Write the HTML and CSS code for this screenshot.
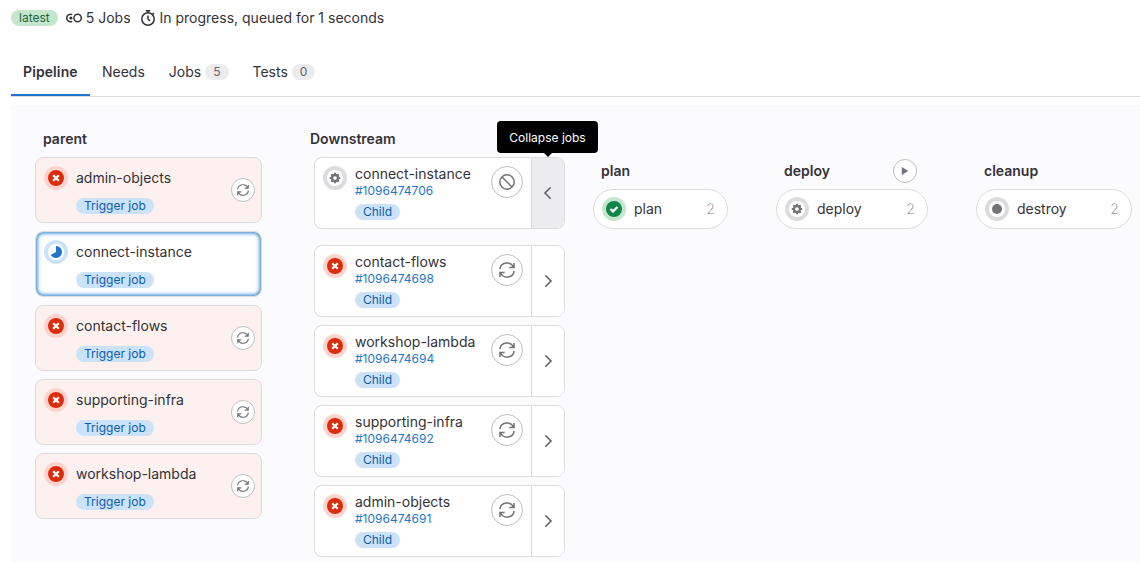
FILE: index.html
```html
<!DOCTYPE html>
<html lang="en">
<head>
<meta charset="utf-8">
<title>Pipeline</title>
<link rel="stylesheet" href="styles.css">
</head>
<body>
<svg class="sprite" aria-hidden="true">
  <symbol id="failed" viewBox="0 0 24 24"><circle cx="12" cy="12" r="12" fill="#fdd4cd"/><circle cx="12" cy="12" r="8" fill="#dd2b0e"/><path d="M9.2 9.2l5.6 5.6m0-5.6l-5.6 5.6" stroke="#fff" stroke-width="2.2"/></symbol>
  <symbol id="running" viewBox="0 0 24 24"><circle cx="12" cy="12" r="12" fill="#cbe2f9"/><circle cx="12" cy="12" r="8" fill="#fff"/><path d="M12 12V6a6 6 0 1 1-5.2 9z" fill="#1f75cb"/></symbol>
  <symbol id="success" viewBox="0 0 24 24"><circle cx="12" cy="12" r="12" fill="#c3e6cd"/><circle cx="12" cy="12" r="8" fill="#108548"/><path d="M8.5 12l2.5 2.4 4.5-4.4" fill="none" stroke="#fff" stroke-width="2.2"/></symbol>
  <symbol id="manual" viewBox="0 0 24 24"><circle cx="12" cy="12" r="12" fill="#dcdcde"/><circle cx="12" cy="12" r="8" fill="#fff"/><circle cx="12" cy="12" r="3" fill="none" stroke="#737278" stroke-width="2.3"/><path d="M12 6.8v2M12 15.2v2M6.8 12h2M15.2 12h2M8.3 8.3l1.4 1.4M14.3 14.3l1.4 1.4M15.7 8.3l-1.4 1.4M9.7 14.3l-1.4 1.4" stroke="#737278" stroke-width="2"/></symbol>
  <symbol id="created" viewBox="0 0 24 24"><circle cx="12" cy="12" r="12" fill="#dcdcde"/><circle cx="12" cy="12" r="8" fill="#fff"/><circle cx="12" cy="12" r="5" fill="#737278"/></symbol>
  <symbol id="retry" viewBox="0 0 16 16"><path d="M.8 7.2A7.2 7.2 0 0 1 14.4 5M15.2 8.8A7.2 7.2 0 0 1 1.6 11M15 1v4.5h-4.7M1 15v-4.5h4.7" fill="none" stroke="currentColor" stroke-width="1.5"/></symbol>
  <symbol id="cancel" viewBox="0 0 16 16"><circle cx="8" cy="8" r="7.2" fill="none" stroke="currentColor" stroke-width="1.5"/><path d="M3 3l10 10" stroke="currentColor" stroke-width="1.5"/></symbol>
  <symbol id="right" viewBox="0 0 16 16"><path d="M5.8 2.8L11 8l-5.2 5.2" fill="none" stroke="currentColor" stroke-width="1.6" stroke-linecap="round"/></symbol>
  <symbol id="left" viewBox="0 0 16 16"><path d="M10.2 2.8L5 8l5.2 5.2" fill="none" stroke="currentColor" stroke-width="1.6" stroke-linecap="round"/></symbol>
  <symbol id="play" viewBox="0 0 12 12"><path d="M2.8 2v8L9.3 6z" fill="currentColor"/></symbol>
  <symbol id="jobs" viewBox="0 0 16 16"><circle cx="11.6" cy="8" r="3.7" fill="none" stroke="currentColor" stroke-width="1.5"/><path d="M6.2 4.6A3.8 3.8 0 1 0 6.2 11.4" fill="none" stroke="currentColor" stroke-width="1.5"/><circle cx="4.9" cy="8" r="1.6" fill="currentColor"/></symbol>
  <symbol id="timer" viewBox="0 0 16 16"><circle cx="8" cy="9" r="6.2" fill="none" stroke="currentColor" stroke-width="1.5"/><path d="M8 5.5V9l2 2M8 3V1M5.8.8h4.4M12.6 4.4l1.4-1.3" fill="none" stroke="currentColor" stroke-width="1.5"/></symbol>
</svg>

<div class="summary">
  <span class="badge badge-success">latest</span>
  <svg class="icon jobs-icon"><use href="#jobs"/></svg><span class="jobs-total">5 Jobs</span>
  <svg class="icon timer-icon"><use href="#timer"/></svg><span>In progress, queued for 1 seconds</span>
</div>

<nav class="tabs">
  <a class="tab tab-active">Pipeline</a>
  <a class="tab">Needs</a>
  <a class="tab">Jobs<span class="count">5</span></a>
  <a class="tab">Tests<span class="count">0</span></a>
</nav>

<main class="graph">
  <section class="parent">
    <h2 class="title">parent</h2>
    <div class="job job-failed"><svg class="status"><use href="#failed"/></svg><div class="job-text"><span class="name">admin-objects</span><span class="badge">Trigger job</span></div><button class="action small"><svg><use href="#retry"/></svg></button></div>
    <div class="job job-focus"><svg class="status"><use href="#running"/></svg><div class="job-text"><span class="name">connect-instance</span><span class="badge">Trigger job</span></div></div>
    <div class="job job-failed"><svg class="status"><use href="#failed"/></svg><div class="job-text"><span class="name">contact-flows</span><span class="badge">Trigger job</span></div><button class="action small"><svg><use href="#retry"/></svg></button></div>
    <div class="job job-failed"><svg class="status"><use href="#failed"/></svg><div class="job-text"><span class="name">supporting-infra</span><span class="badge">Trigger job</span></div><button class="action small"><svg><use href="#retry"/></svg></button></div>
    <div class="job job-failed"><svg class="status"><use href="#failed"/></svg><div class="job-text"><span class="name">workshop-lambda</span><span class="badge">Trigger job</span></div><button class="action small"><svg><use href="#retry"/></svg></button></div>
  </section>

  <section class="downstream">
    <h2 class="title">Downstream</h2>
    <div class="child child-open"><svg class="status"><use href="#manual"/></svg><div class="child-text"><span class="name">connect-instance</span><a class="link">#1096474706</a><span class="badge">Child</span></div><button class="action"><svg><use href="#cancel"/></svg></button><button class="expand"><svg class="icon"><use href="#left"/></svg><span class="tooltip">Collapse jobs</span></button></div>
    <div class="child"><svg class="status"><use href="#failed"/></svg><div class="child-text"><span class="name">contact-flows</span><a class="link">#1096474698</a><span class="badge">Child</span></div><button class="action"><svg><use href="#retry"/></svg></button><button class="expand"><svg class="icon"><use href="#right"/></svg></button></div>
    <div class="child"><svg class="status"><use href="#failed"/></svg><div class="child-text"><span class="name">workshop-lambda</span><a class="link">#1096474694</a><span class="badge">Child</span></div><button class="action"><svg><use href="#retry"/></svg></button><button class="expand"><svg class="icon"><use href="#right"/></svg></button></div>
    <div class="child"><svg class="status"><use href="#failed"/></svg><div class="child-text"><span class="name">supporting-infra</span><a class="link">#1096474692</a><span class="badge">Child</span></div><button class="action"><svg><use href="#retry"/></svg></button><button class="expand"><svg class="icon"><use href="#right"/></svg></button></div>
    <div class="child"><svg class="status"><use href="#failed"/></svg><div class="child-text"><span class="name">admin-objects</span><a class="link">#1096474691</a><span class="badge">Child</span></div><button class="action"><svg><use href="#retry"/></svg></button><button class="expand"><svg class="icon"><use href="#right"/></svg></button></div>
  </section>

  <div class="stages">
    <section class="stage stage-plan"><header class="stage-head"><h2>plan</h2></header><div class="pill"><svg class="status"><use href="#success"/></svg><span class="name">plan</span><span class="size">2</span></div></section>
    <section class="stage stage-deploy"><header class="stage-head"><h2>deploy</h2><button class="action small"><svg><use href="#play"/></svg></button></header><div class="pill"><svg class="status"><use href="#manual"/></svg><span class="name">deploy</span><span class="size">2</span></div></section>
    <section class="stage stage-cleanup"><header class="stage-head"><h2>cleanup</h2></header><div class="pill"><svg class="status"><use href="#created"/></svg><span class="name">destroy</span><span class="size">2</span></div></section>
  </div>
</main>
</body>
</html>
```
FILE: styles.css
```css
* { box-sizing: border-box; }
body {
  margin: 0;
  height: 562px;
  overflow: hidden;
  padding-left: 11px;
  display: flex;
  flex-direction: column;
  background: #fff;
  color: #333238;
  font: 14px/20px Inter, "Liberation Sans", sans-serif;
}
h2 { margin: 0; font-size: 14px; font-weight: 600; line-height: 20px; }
button { font: inherit; padding: 0; cursor: pointer; }
svg { display: block; flex: none; }
.sprite { position: absolute; width: 0; height: 0; }
.icon { width: 16px; height: 16px; }

.badge {
  height: 16px;
  padding: 0 8px;
  border-radius: 8px;
  background: #cbe2f9;
  color: #0b5cad;
  font-size: 12px;
  line-height: 16px;
}
.badge-success { background: #c3e6cd; color: #24663b; }

.summary { display: flex; align-items: center; height: 36px; white-space: nowrap; }
.jobs-icon { margin: 0 4px 0 8px; }
.timer-icon { margin: 0 4px 0 9px; }

.tabs { display: flex; height: 61px; border-bottom: 1px solid #dcdcde; }
.tab { display: flex; align-items: center; padding: 12px 12px 0; }
.tab-active { width: 79px; font-weight: 600; letter-spacing: .1px; border-bottom: 2px solid #1f75cb; padding-top: 14px; }
.count {
  margin-left: 4px;
  padding: 0 8px;
  border-radius: 8px;
  background: #ececef;
  color: #626168;
  font-size: 12px;
  line-height: 16px;
  min-width: 23px;
  text-align: center;
}

.graph {
  flex: 1;
  min-height: 0;
  margin-top: 8px;
  display: flex;
  background: #fbfafd;
  border-radius: 4px 0 0 4px;
  white-space: nowrap;
}
.status { width: 24px; height: 24px; }
.action {
  display: flex;
  align-items: center;
  justify-content: center;
  flex: none;
  width: 32px;
  height: 32px;
  border: 1px solid #bfbfc3;
  border-radius: 50%;
  background: #fff;
  color: #737278;
}
.action svg { width: 16px; height: 16px; }
.action.small { width: 24px; height: 24px; }
.action.small svg { width: 12px; height: 12px; }

.parent { width: 227px; margin-left: 24px; padding-top: 24px; display: flex; flex-direction: column; gap: 8px; }
.parent .title { padding-left: 8px; }
.job {
  display: flex;
  height: 66px;
  padding: 8px 6px 8px 8px;
  border: 1px solid #dcdcde;
  border-radius: 8px;
  background: #fff;
}
.job-failed { background: #fcf1ef; }
.job-focus { box-shadow: inset 0 0 4px 1px #1f75cb; }
.job-text { flex: 1; display: flex; flex-direction: column; align-items: flex-start; gap: 10px; margin-left: 8px; padding-top: 2px; }
.job .action { align-self: center; }

.downstream { width: 255px; margin-left: 48px; padding-top: 24px; display: flex; flex-direction: column; gap: 8px; }
.child {
  display: flex;
  height: 72px;
  margin-left: 4px;
  border: 1px solid #dcdcde;
  border-radius: 8px;
  background: #fff;
}
.child-open { margin-bottom: 8px; }
.child .status { margin: 8px 8px 0; }
.child-text { flex: 1; display: flex; flex-direction: column; align-items: flex-start; padding-top: 6px; }
.link { color: #1f75cb; font-size: 12px; line-height: 16px; margin: -1px 0 5px; }
.child .action { margin: 8px 8px 0 0; }
.expand {
  position: relative;
  display: flex;
  align-items: center;
  justify-content: center;
  width: 33px;
  border: 0;
  border-left: 1px solid #dcdcde;
  border-radius: 0 7px 7px 0;
  background: #fff;
  color: #626168;
}
.child-open .expand { background: #ececef; }
.tooltip {
  position: absolute;
  left: -35px;
  bottom: 75px;
  width: 101px;
  height: 32px;
  border-radius: 4px;
  background: #000;
  color: #fff;
  font-size: 12px;
  line-height: 34px;
  text-align: center;
}
.tooltip::after {
  content: "";
  position: absolute;
  top: 32px;
  left: 47px;
  border: 4px solid transparent;
  border-top-color: #000;
  border-bottom: 0;
}

.stages { display: flex; align-items: flex-start; gap: 48px; margin-left: 28px; padding-top: 54px; }
.stage-plan { width: 135px; }
.stage-deploy { width: 152px; }
.stage-cleanup { width: 156px; }
.stage-head { display: flex; align-items: center; justify-content: space-between; height: 24px; padding: 0 11px 0 8px; margin-bottom: 6px; }
.pill {
  display: flex;
  align-items: center;
  height: 40px;
  padding: 0 12px 0 8px;
  border: 1px solid #dcdcde;
  border-radius: 20px;
  background: #fff;
}
.pill .name { flex: 1; margin-left: 8px; }
.size { color: #737278; font-weight: 200; }
```
